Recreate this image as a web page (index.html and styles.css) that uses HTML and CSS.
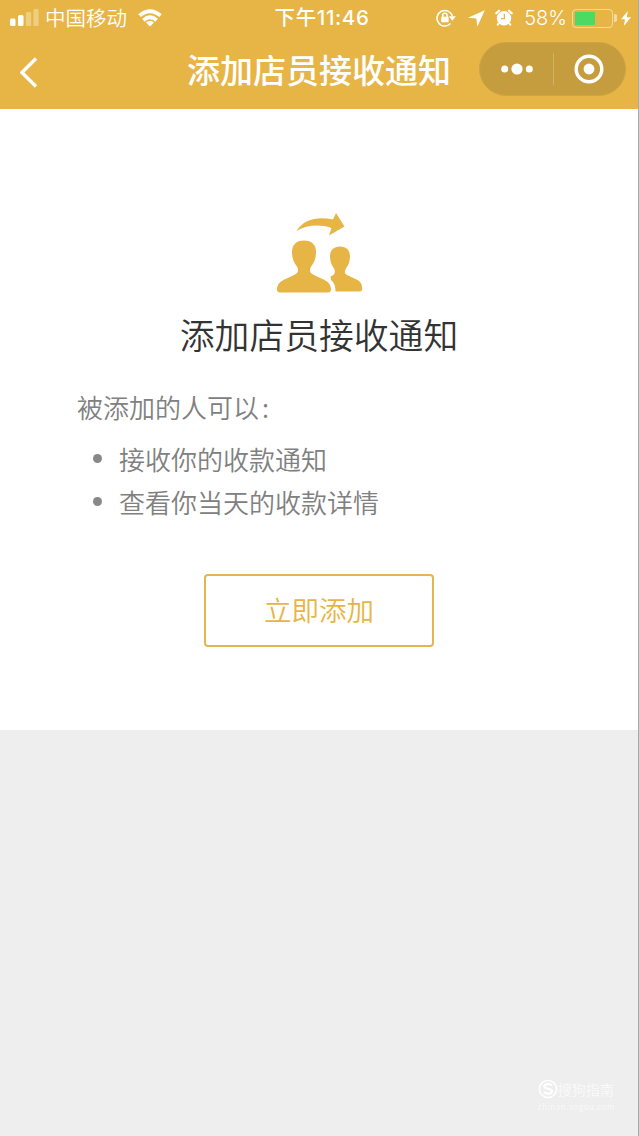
FILE: index.html
```html
<!DOCTYPE html>
<html lang="zh-CN">
<head>
<meta charset="UTF-8" />
<meta name="viewport" content="width=device-width, initial-scale=1" />
<title>添加店员接收通知</title>
<link rel="stylesheet" href="styles.css">
</head>
<body>

<header class="header">
  <div class="status-bar">
    <div class="status-left">
      <svg class="signal" width="29" height="18" viewBox="0 0 29 18" fill="#fff">
        <rect x="0" y="9.5" width="5.5" height="7.5" rx="1.5" />
        <rect x="8" y="6" width="5.5" height="11" rx="1.5" />
        <rect x="16" y="3" width="5.2" height="14" rx="1" opacity=".32" />
        <rect x="23.5" y="0" width="5.2" height="17" rx="1" opacity=".32" />
      </svg>
      <span class="carrier">中国移动</span>
      <svg class="wifi" width="24" height="18" viewBox="0 0 24 18" fill="none" stroke="#fff" stroke-width="3.8">
        <path d="M1.5 6.6Q12-2.2 22.5 6.600" />
        <path d="M5.400 11.2Q12 5.4 18.600 11.2" />
        <path d="M12 17.400l-4-4Q12 10 16 13.400z" fill="#fff" stroke="none" />
      </svg>
    </div>
    <div class="status-time">下午11:46</div>
    <div class="status-right">
      <svg width="20" height="18" viewBox="0 0 20 18" fill="none" stroke="#fff" stroke-width="1.5">
        <path d="M16.300 7A7.800 7.800 0 1 0 14.500 14.600" />
        <path d="M12.800 7.300h7l-3.500 4.500z" fill="#fff" stroke="none" />
        <rect x="5.200" y="7.800" width="7.400" height="5.400" rx=".6" fill="#fff" stroke="none" />
        <path d="M6.700 8.400V6.500a2.200 2.200 0 0 1 4.400 0v1.900" />
      </svg>
      <svg class="location" width="17" height="17" viewBox="0 0 17 17" fill="#fff">
        <path d="M16.800.2L0 7.800l8.400.8.9 8.200z" />
      </svg>
      <svg class="alarm" width="18" height="18" viewBox="0 0 18 18">
        <circle cx="9" cy="9.300" r="7.200" fill="#fff" />
        <path d="M1.300 4.300L4 1.700M16.700 4.300L14 1.700" stroke="#fff" stroke-width="2.200" stroke-linecap="round" />
        <path d="M3.600 14.300L2.300 16.500M14.400 14.300l1.300 2.200" stroke="#fff" stroke-width="1.800" />
        <path d="M9.400 5v4.600H6" fill="none" stroke="#e7b546" stroke-width="1.300" />
      </svg>
      <span class="percent">58%</span>
      <span class="battery"><span class="battery-level"></span></span>
      <svg class="battery-cap" width="3" height="8" viewBox="0 0 3 8" fill="#fff">
        <path d="M0 0a4 4 0 0 1 0 8z" opacity=".5" />
      </svg>
      <svg class="bolt" width="10" height="15" viewBox="0 0 10 15" fill="#fff">
        <path d="M6.800 0L0 8.300h4L2.800 15 10 6.200H5.800z" />
      </svg>
    </div>
  </div>

  <div class="nav-bar">
    <svg class="back" width="18" height="31" viewBox="0 0 18 31" fill="none" stroke="#fff" stroke-width="3.400">
      <path d="M16 1.500L2 15.500l14 14" />
    </svg>
    <h1 class="nav-title">添加店员接收通知</h1>
    <div class="capsule">
      <svg width="32" height="12" viewBox="0 0 32 12" fill="#fff">
        <circle cx="3.700" cy="6" r="3.500" />
        <circle cx="16" cy="6" r="5.600" />
        <circle cx="28.300" cy="6" r="3.500" />
      </svg>
      <span class="capsule-line"></span>
      <svg width="30" height="30" viewBox="0 0 30 30">
        <circle cx="15" cy="15" r="12.800" fill="none" stroke="#fff" stroke-width="3.400" />
        <circle cx="15" cy="15" r="5.400" fill="#fff" />
      </svg>
    </div>
  </div>
</header>

<main class="content">
  <svg class="people" width="86" height="80" viewBox="0 0 86 80" fill="#e7b546">
    <path d="M19.500 18C27 6 40 3.500 56 6.500L59 0l8.500 13.500L52 22.500l2.500-7.500C42 11 30 12 19.500 18z" />
    <path d="M27 27.500c8 0 12 4.500 12 11.500 0 6-1.500 10-4.500 14-2.500 3.500-2 6.500 1.500 8.500l11.500 5.500c4.500 2.200 6.500 5.500 6.500 9.500 0 2-1 3-3 3H3c-2 0-3-1-3-3 0-4 2-7.300 6.500-9.500L18 61.500c3.500-2 4-5 1.500-8.500-3-4-4.500-8-4.500-14 0-7 4-11.500 12-11.500z" />
    <path d="M63 33.500c6.500 0 10 4 10 10 0 5-1.500 8.500-4 12-2 3-1.500 5 1.500 6.700l9 4.300c4 2 5.700 4.500 5.700 9 0 2-.7 3-2.700 3H58.500c0-5-1-8.500-4.500-11.500l-.5-3.500c4-.8 5.500-4.500 3.500-8-2.500-3.500-4-7-4-12 0-6 3.500-10 10-10z" />
  </svg>
  <h2 class="title">添加店员接收通知</h2>
  <div class="desc">
    <p>被添加的人可以<span class="colon">:</span></p>
    <ul>
      <li>接收你的收款通知</li>
      <li>查看你当天的收款详情</li>
    </ul>
  </div>
  <button class="add-btn" type="button">立即添加</button>
</main>

<footer class="footer">
  <div class="brand">
    <svg width="20" height="20" viewBox="0 0 20 20" fill="none" stroke="#fff">
      <circle cx="10" cy="10" r="8.600" stroke-width="1.500" />
      <path d="M14 6.500C12 4.500 6 4.500 6.300 7.500c.3 3 7.700 1.500 7.700 4.800 0 3-6 3.200-8.200.7" stroke-width="2.200" />
    </svg>
    <span>搜狗指南</span>
  </div>
  <div class="site">zhinan.sogou.com</div>
</footer>

</body>
</html>
```

FILE: styles.css
```css
/* Reset */
*, *::before, *::after {
  box-sizing: border-box;
}

body {
  margin: 0;
  height: 1136px;
  overflow: hidden;
  font-family: 'Noto Sans CJK SC', 'Noto Sans', sans-serif;
  font-weight: 350;
  background: #eeeeee;
  color: #333;
  display: flex;
  flex-direction: column;
  border-right: 1px solid #a9a9a9;
}

h1, h2, p, ul {
  margin: 0;
  padding: 0;
}

svg {
  display: block;
  flex-shrink: 0;
}

/* Header */
.header {
  height: 109px;
  margin-right: -1px;
  background: #e7b546;
  border-right: 1px solid #b58f3a;
  color: #fff;
}

.status-bar {
  height: 36px;
  display: grid;
  grid-template-columns: 1fr auto 1fr;
  align-items: center;
  padding: 0 7px 0 10px;
  font-size: 20.5px;
  line-height: 34px;
}

.status-left,
.status-right {
  display: flex;
  align-items: center;
}

.status-left {
  height: 34px;
}

.status-right {
  justify-content: flex-end;
}

.carrier {
  margin-left: 6px;
  line-height: 32px;
  padding-bottom: 2px;
}

.wifi {
  margin-left: 11px;
}

.status-time {
  font-family: Inter, 'Noto Sans CJK SC', sans-serif;
  font-weight: 500;
  font-size: 20.5px;
  letter-spacing: .6px;
  padding-left: 3px;
}

.location {
  margin-left: 12px;
}

.alarm {
  margin-left: 10px;
}

.percent {
  margin-left: 11px;
  font-family: Inter, sans-serif;
  font-size: 20px;
  font-weight: 300;
}

.battery {
  width: 41px;
  height: 19px;
  margin-left: 5px;
  padding: 2px;
  border: 1.5px solid rgba(255, 255, 255, .5);
  border-radius: 4px;
}

.battery-level {
  display: block;
  width: 58%;
  height: 100%;
  background: #4cd964;
}

.battery-cap {
  margin-left: 1px;
}

.bolt {
  margin-left: 4px;
}

/* Nav bar */
.nav-bar {
  height: 65px;
  display: grid;
  grid-template-columns: 1fr auto 1fr;
  align-items: center;
  padding: 0 12px;
}

.back {
  margin: 6px 0 0 8px;
}

.nav-title {
  font-size: 33px;
  font-weight: 500;
  line-height: 66px;
}

.capsule {
  justify-self: end;
  width: 147px;
  height: 54px;
  display: flex;
  align-items: center;
  justify-content: space-between;
  padding: 0 21px;
  background: #c69d3e;
  border: 1px solid #cfa542;
  border-radius: 27px;
}

.capsule-line {
  width: 1px;
  height: 32px;
  background: #d5b269;
}

/* Content */
.content {
  height: 621px;
  display: flex;
  flex-direction: column;
  align-items: center;
  padding-top: 104px;
  background: #fff;
}

.people {
  margin-left: 1px;
}

.title {
  margin-top: 15px;
  font-size: 34.8px;
  font-weight: 350;
  line-height: 52px;
}

.desc {
  align-self: flex-start;
  margin: 26px 0 0 77px;
  font-size: 26px;
  color: #808080;
}

.desc p {
  line-height: 42px;
}

.colon {
  margin-left: 3px;
}

.desc ul {
  margin-top: 9px;
  list-style: none;
}

.desc li {
  display: flex;
  align-items: center;
  line-height: 43px;
}

.desc li::before {
  content: '';
  width: 9px;
  height: 9px;
  margin: 0 17px 0 16px;
  border-radius: 50%;
  background: #888;
}

.add-btn {
  width: 230px;
  height: 73px;
  margin-top: 51px;
  padding: 0 0 3px;
  border: 2px solid #e2b74f;
  border-radius: 4px;
  background: #fff;
  color: #e7b546;
  font-family: inherit;
  font-size: 27.5px;
  font-weight: 350;
}

/* Footer */
.footer {
  margin-top: auto;
  align-self: flex-end;
  padding: 0 23px 23px 0;
  color: #fafafa;
}

.brand {
  display: flex;
  align-items: center;
  font-size: 14px;
  line-height: 22px;
}

.site {
  font-size: 8px;
  line-height: 13px;
  letter-spacing: .6px;
}
```
